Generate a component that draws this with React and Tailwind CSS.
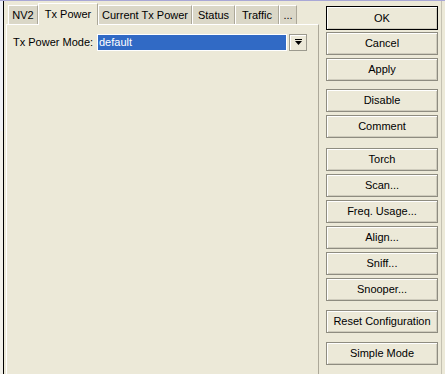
import React from 'react';

const font = { fontFamily: '"Liberation Sans", Arial, sans-serif' };

const tabs = [
  { label: 'NV2', w: 'w-[30px]' },
  { label: 'Tx Power', w: 'w-[60px]', active: true },
  { label: 'Current Tx Power', w: 'w-[94px]' },
  { label: 'Status', w: 'w-[43px]' },
  { label: 'Traffic', w: 'w-[44px]' },
  { label: '...', w: 'w-[18px]' },
];

const Btn = ({ children, def, className = '' }) => (
  <button
    className={`flex items-center justify-center w-full text-[11px] text-black bg-[#ECE9D8] border ${
      def ? 'h-[24px] border-black' : 'h-[23px] border-[#8e8c80]'
    } shadow-[inset_1px_1px_0_#ffffff,inset_-1px_-1px_0_#cfccbd] ${className}`}
  >
    {children}
  </button>
);

const Arrow = () => (
  <svg width="7" height="7" viewBox="0 0 7 7">
    <rect x="0" y="0" width="7" height="1" fill="#000" />
    <polygon points="0,2 7,2 3.5,6" fill="#000" />
  </svg>
);

export default function App() {
  return (
    <div
      className="w-[445px] h-[374px] flex bg-[#ECE9D8] border-t border-[#a9a8d6] overflow-hidden"
      style={font}
    >
      {/* window behind */}
      <div className="w-[3px] h-full bg-[#f1f0ea] flex flex-col">
        <div className="h-[130px] bg-[#eef0f5]" />
      </div>
      <div className="w-px h-full bg-black" />

      {/* tab area */}
      <div className="ml-[2px] w-[313px] flex flex-col">
        <div className="h-[23px] flex items-end pl-[2px]">
          {tabs.map((t) =>
            t.active ? (
              <div
                key={t.label}
                className={`${t.w} h-[22px] -mb-px relative z-10 bg-[#ECE9D8] border-t border-l border-white border-r border-r-[#aca899] flex items-center justify-center text-[11px] text-black`}
              >
                {t.label}
              </div>
            ) : (
              <div
                key={t.label}
                className={`${t.w} h-[19px] bg-[#dad7c7] border-t border-l border-white border-r border-r-[#aca899] flex items-center justify-center text-[11px] text-black`}
              >
                {t.label}
              </div>
            )
          )}
        </div>
        <div className="flex-1 border-t border-l border-white border-r border-r-[#aca899] pl-[6px] pt-[9px]">
          <div className="flex items-center h-[17px]">
            <span className="w-[84px] text-[11px] text-black">Tx Power Mode:</span>
            <div className="w-[190px] h-[17px] border border-white bg-[#316ac5] flex items-center pl-[1px] text-[11px] text-white">
              default
            </div>
            <div className="ml-[2px] w-[18px] h-[17px] border border-[#9c9a8e] bg-[#ECE9D8] flex items-center justify-center shadow-[inset_1px_1px_0_#ffffff]">
              <Arrow />
            </div>
          </div>
        </div>
      </div>

      {/* buttons */}
      <div className="ml-[7px] w-[112px] pt-[5px] flex flex-col">
        <Btn def>OK</Btn>
        <Btn className="mt-[2px]">Cancel</Btn>
        <Btn className="mt-[3px]">Apply</Btn>
        <Btn className="mt-[8px]">Disable</Btn>
        <Btn className="mt-[3px]">Comment</Btn>
        <Btn className="mt-[10px]">Torch</Btn>
        <Btn className="mt-[3px]">Scan...</Btn>
        <Btn className="mt-[3px]">Freq. Usage...</Btn>
        <Btn className="mt-[3px]">Align...</Btn>
        <Btn className="mt-[3px]">Sniff...</Btn>
        <Btn className="mt-[3px]">Snooper...</Btn>
        <Btn className="mt-[9px]">Reset Configuration</Btn>
        <Btn className="mt-[9px]">Simple Mode</Btn>
      </div>

      <div className="ml-[3px] w-px h-full bg-[#c4c1b2]" />
    </div>
  );
}
